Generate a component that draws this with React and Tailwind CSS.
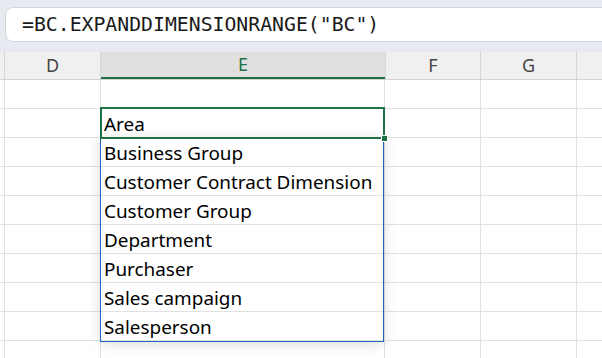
import React from "react";

const items = [
  "Area",
  "Business Group",
  "Customer Contract Dimension",
  "Customer Group",
  "Department",
  "Purchaser",
  "Sales campaign",
  "Salesperson",
];

const rows = ["", ...items, "", ""];

const App = () => {
  return (
    <div className="w-[602px] h-[358px] overflow-hidden bg-white" style={{ fontFamily: "'Noto Sans', sans-serif" }}>
      {/* formula bar */}
      <div className="h-[52px] bg-[#e7ebf1] pt-[7px] pl-[5px] border-b border-[#e2e5ea]">
        <div className="h-[35px] w-[640px] rounded-lg border border-[#d3d6db] bg-white flex items-center pl-[16px]">
          <span className="text-[19.8px] text-[#1a1a1a] leading-none" style={{ fontFamily: "'DejaVu Sans Mono', monospace" }}>
            =BC.EXPANDDIMENSIONRANGE("BC")
          </span>
        </div>
      </div>

      {/* column headers */}
      <div className="flex h-[28px] bg-[#f0f0f0] border-b border-[#d2d2d2] text-[18px] text-[#444]">
        <div className="w-[5px] shrink-0 border-r border-[#d6d6d6]" />
        <div className="w-[96px] shrink-0 border-r border-[#d6d6d6] flex items-center justify-center">D</div>
        <div className="w-[284px] shrink-0 bg-[#e0e0e0] border-b-2 border-[#1e7145] flex items-center justify-center text-[#1e7145]">E</div>
        <div className="w-[96px] shrink-0 border-l border-r border-[#d6d6d6] flex items-center justify-center">F</div>
        <div className="w-[96px] shrink-0 border-r border-[#d6d6d6] flex items-center justify-center">G</div>
        <div className="flex-1" />
      </div>

      {/* grid */}
      <div className="relative">
        {rows.map((label, i) => (
          <div key={i} className="flex h-[29px] border-b border-[#e1e1e1]">
            <div className="w-[5px] shrink-0 border-r border-[#e1e1e1]" />
            <div className="w-[96px] shrink-0 border-r border-[#e1e1e1]" />
            <div className="w-[284px] shrink-0 border-r border-[#e1e1e1] flex items-center pl-[3px] pt-[2px] text-[18.9px] text-black leading-none">
              {label}
            </div>
            <div className="w-[96px] shrink-0 border-r border-[#e1e1e1]" />
            <div className="w-[96px] shrink-0 border-r border-[#e1e1e1]" />
            <div className="flex-1" />
          </div>
        ))}

        {/* spill range */}
        <div className="absolute left-[100px] top-[57px] w-[284px] h-[205px] border border-[#1f63be] shadow-[0_2px_12px_rgba(0,0,0,0.14)]" />
        {/* active cell */}
        <div className="absolute left-[100px] top-[27px] w-[285px] h-[32px] border-2 border-[#1e7145]" />
        <div className="absolute left-[381px] top-[55px] w-[7px] h-[7px] bg-[#1e7145] border border-white" />
      </div>
    </div>
  );
};

export default App;
